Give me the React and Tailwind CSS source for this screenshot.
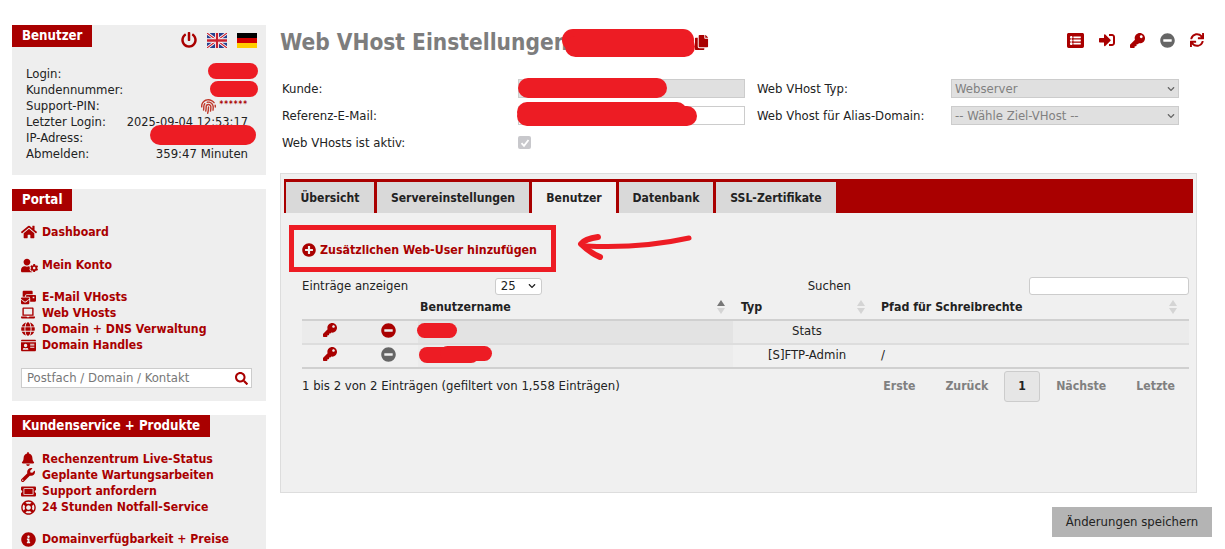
import {
  FaHome, FaUserCog, FaMailBulk, FaLaptop, FaGlobe, FaIdCard, FaSearch, FaBell, FaWrench, FaTicketAlt,
  FaRegLifeRing, FaInfoCircle, FaPowerOff, FaFingerprint, FaListAlt, FaSignInAlt, FaKey, FaMinusCircle,
  FaSync, FaPlusCircle, FaCopy, FaChevronDown,
} from 'react-icons/fa';

const font = { fontFamily: '"DejaVu Sans", sans-serif' };

const UkFlag = () => (
  <svg width="20" height="15" viewBox="0 0 60 40" preserveAspectRatio="none">
    <rect width="60" height="40" fill="#27408f" />
    <path d="M0 0L60 40M60 0L0 40" stroke="#fff" strokeWidth="8" />
    <path d="M0 0L60 40M60 0L0 40" stroke="#c8202f" strokeWidth="3" />
    <path d="M30 0V40M0 20H60" stroke="#fff" strokeWidth="12" />
    <path d="M30 0V40M0 20H60" stroke="#c8202f" strokeWidth="7" />
  </svg>
);

const DeFlag = () => (
  <div className="flex h-[15px] w-[20px] flex-col">
    <div className="flex-1 bg-black" />
    <div className="flex-1 bg-[#d00000]" />
    <div className="flex-1 bg-[#ffce00]" />
  </div>
);

const SideTitle = ({ children }) => (
  <div className="inline-block h-[22px] bg-[#a90000] px-[10px] text-[13.2px] leading-[22px] font-bold text-white">{children}</div>
);

const NavLink = ({ icon: Icon, size = 15, children, className = '' }) => (
  <div className={`flex h-4 items-center text-[12.2px] font-bold text-[#a90000] ${className}`}>
    <span className="flex w-[21px] shrink-0 justify-start"><Icon size={size} /></span>
    <span className="whitespace-nowrap">{children}</span>
  </div>
);

const InfoRow = ({ label, value }) => (
  <div className="flex h-4 items-center justify-between whitespace-nowrap">
    <span>{label}</span>
    <span>{value}</span>
  </div>
);

const Tab = ({ children, active, className = '' }) => (
  <div className={`flex h-[31px] items-center justify-center pt-[2px] text-[12.1px] font-bold text-[#222] ${active ? 'bg-[#f0f0f0]' : 'bg-[#d9d9d9]'} ${className}`}>
    {children}
  </div>
);

const SortArrows = ({ active, className = 'right-2' }) => (
  <span className={`absolute top-0 flex flex-col ${className}`}>
    <svg width="8" height="14" viewBox="0 0 8 14">
      <path d="M4 0L8 6H0Z" fill={active ? '#777' : '#d4d4d4'} />
      <path d="M4 14L0 8H8Z" fill="#d4d4d4" />
    </svg>
  </span>
);

const Blob = ({ className }) => <div className={`absolute rounded-full bg-[#ed1c24] ${className}`} />;

export default function App() {
  return (
    <div className="relative flex h-[549px] w-[1225px] overflow-hidden bg-white text-[13px] font-stretch-condensed text-[#222]" style={font}>
      {/* Sidebar */}
      <aside className="ml-3 flex w-[254px] shrink-0 flex-col gap-[14px] pt-[25px]">
        <section className="h-[150px] bg-[#eeeeee]">
          <div className="flex items-start justify-between">
            <SideTitle>Benutzer</SideTitle>
            <div className="mt-[7px] mr-[9px] flex items-center gap-[10px]">
              <FaPowerOff size={16} className="text-[#a90000]" />
              <UkFlag />
              <DeFlag />
            </div>
          </div>
          <div className="mt-[18px] mr-[18px] ml-[14px] flex flex-col">
            <InfoRow label="Login:" />
            <InfoRow label="Kundennummer:" />
            <InfoRow
              label="Support-PIN:"
              value={
                <span className="flex items-center gap-[3px] text-[8px] font-bold text-[#a90000]">
                  <FaFingerprint size={15} className="text-[#c0392b]" />
                  <span className="-mt-[3px] tracking-[1px]">******</span>
                </span>
              }
            />
            <InfoRow label="Letzter Login:" value={<span className="text-[12.7px]">2025-09-04 12:53:17</span>} />
            <InfoRow label="IP-Adress:" />
            <InfoRow label="Abmelden:" value="359:47 Minuten" />
          </div>
        </section>

        <section className="h-[212px] bg-[#eeeeee]">
          <SideTitle>Portal</SideTitle>
          <div className="mt-[13px] ml-[9px]">
            <NavLink icon={FaHome} size={16}>Dashboard</NavLink>
            <NavLink icon={FaUserCog} size={17} className="mt-[17px]">Mein Konto</NavLink>
            <NavLink icon={FaMailBulk} className="mt-4">E-Mail VHosts</NavLink>
            <NavLink icon={FaLaptop} size={14}>Web VHosts</NavLink>
            <NavLink icon={FaGlobe} size={14}>Domain + DNS Verwaltung</NavLink>
            <NavLink icon={FaIdCard}>Domain Handles</NavLink>
          </div>
          <div className="mt-[15px] ml-[9px] flex h-5 w-[231px] items-center justify-between border border-[#cccccc] bg-white pr-[3px] pl-[5px] text-[#777]">
            <span>Postfach / Domain / Kontakt</span>
            <FaSearch size={13} className="text-[#a90000]" />
          </div>
        </section>

        <section className="flex-1 bg-[#eeeeee]">
          <SideTitle>Kundenservice + Produkte</SideTitle>
          <div className="mt-[14px] ml-[9px]">
            <NavLink icon={FaBell} size={14}>Rechenzentrum Live-Status</NavLink>
            <NavLink icon={FaWrench} size={14}>Geplante Wartungsarbeiten</NavLink>
            <NavLink icon={FaTicketAlt}>Support anfordern</NavLink>
            <NavLink icon={FaRegLifeRing} size={15}>24 Stunden Notfall-Service</NavLink>
            <NavLink icon={FaInfoCircle} size={15} className="mt-4">Domainverfügbarkeit + Preise</NavLink>
          </div>
        </section>
      </aside>

      {/* Main */}
      <main className="ml-[14px] w-[932px] shrink-0">
        <header className="flex items-center justify-between pt-[28px]">
          <h1 className="flex items-center text-[22.5px] leading-[28px] font-bold text-[#7d7d7d]">
            Web VHost Einstellungen
            <FaCopy size={15} className="ml-[126px] text-[#a90000]" />
          </h1>
          <div className="-mt-1 mr-2 flex items-center gap-[15px] text-[#a90000]">
            <FaListAlt size={17} />
            <FaSignInAlt size={16} />
            <FaKey size={15} />
            <FaMinusCircle size={15} className="text-[#666]" />
            <FaSync size={14} />
          </div>
        </header>

        <div className="mt-[23px] ml-[2px] flex">
          <div className="flex w-[236px] flex-col gap-[8px]">
            <div className="h-[19px] leading-[19px]">Kunde:</div>
            <div className="h-[19px] leading-[19px]">Referenz-E-Mail:</div>
            <div className="h-[19px] leading-[19px]">Web VHosts ist aktiv:</div>
          </div>
          <div className="flex w-[227px] flex-col gap-[8px]">
            <div className="h-[19px] border border-[#cccccc] bg-[#e0e0e0]" />
            <div className="h-[19px] border border-[#cccccc] bg-white" />
            <div className="mt-[3px] flex h-[13px] w-[13px] items-center justify-center rounded-[2px] bg-[#c8c8cc]">
              <svg width="10" height="10" viewBox="0 0 10 10"><path d="M1.5 5.2L4 7.8L8.5 2" fill="none" stroke="#fff" strokeWidth="1.8" /></svg>
            </div>
          </div>
          <div className="ml-[12px] flex w-[194px] flex-col gap-[8px]">
            <div className="h-[19px] leading-[19px]">Web VHost Typ:</div>
            <div className="h-[19px] leading-[19px] whitespace-nowrap">Web Vhost für Alias-Domain:</div>
          </div>
          <div className="flex w-[228px] flex-col gap-[8px] text-[#808080]">
            <div className="flex h-[19px] items-center justify-between border border-[#cccccc] bg-[#e0e0e0] pr-[3px] pl-[3px]">
              <span>Webserver</span>
              <FaChevronDown size={8} className="text-[#666]" />
            </div>
            <div className="flex h-[19px] items-center justify-between border border-[#cccccc] bg-[#e0e0e0] pr-[3px] pl-[3px]">
              <span>-- Wähle Ziel-VHost --</span>
              <FaChevronDown size={8} className="text-[#666]" />
            </div>
          </div>
        </div>

        <section className="mt-[21px] h-[320px] w-[917px] border border-[#dddddd] bg-[#f0f0f0] px-[3px] pt-[5px]">
          <div className="flex h-[34px] items-end gap-[3px] bg-[#a90000] pl-[2px]">
            <Tab className="w-[88px]">Übersicht</Tab>
            <Tab className="w-[152px]">Servereinstellungen</Tab>
            <Tab active className="w-[84px]">Benutzer</Tab>
            <Tab className="w-[94px]">Datenbank</Tab>
            <Tab className="w-[120px]">SSL-Zertifikate</Tab>
          </div>

          <div className="mt-[28px] ml-[18px] flex h-[18px] items-center text-[12.3px] font-bold text-[#a90000]">
            <FaPlusCircle size={14} className="mr-[4px]" />
            Zusätzlichen Web-User hinzufügen
          </div>

          <div className="mt-[18px] ml-[18px] w-[887px]">
            <div className="flex h-[18px] items-center">
              <span className="w-[193px]">Einträge anzeigen</span>
              <span className="flex h-[17px] w-[47px] items-center justify-between rounded-[3px] border border-[#cccccc] bg-white px-[5px]">
                25 <FaChevronDown size={8} />
              </span>
              <span className="ml-[266px] w-[221px]">Suchen</span>
              <span className="ml-[1px] h-[18px] w-40 rounded-[3px] border border-[#cccccc] bg-white" />
            </div>

            <table className="mt-[5px] w-[887px] table-fixed border-collapse">
              <colgroup>
                <col className="w-[56px]" />
                <col className="w-[60px]" />
                <col className="w-[315px]" />
                <col className="w-[140px]" />
                <col className="w-[316px]" />
              </colgroup>
              <thead>
                <tr className="h-[20px] border-b-2 border-[#d0d0d0] text-left">
                  <th />
                  <th />
                  <th className="relative pb-[5px] pl-[2px] text-[12.3px] leading-[14px] font-bold">Benutzername<SortArrows active /></th>
                  <th className="relative pb-[5px] pl-2 text-[12.3px] leading-[14px] font-bold">Typ<SortArrows /></th>
                  <th className="relative pb-[5px] pl-2 text-[12.3px] leading-[14px] font-bold">Pfad für Schreibrechte<SortArrows className="right-3" /></th>
                </tr>
              </thead>
              <tbody>
                <tr className="h-[24px] border-b-2 border-[#dddddd] bg-[#ebebeb]">
                  <td className="pb-1"><FaKey size={14} className="mx-auto text-[#a90000]" /></td>
                  <td className="pb-1"><FaMinusCircle size={15} className="mx-auto text-[#a90000]" /></td>
                  <td className="bg-[#e3e3e3]" />
                  <td className="pb-[2px] pl-2 text-center">Stats</td>
                  <td />
                </tr>
                <tr className="h-[24px] border-b-2 border-[#d0d0d0]">
                  <td className="pb-1"><FaKey size={14} className="mx-auto text-[#a90000]" /></td>
                  <td className="pb-1"><FaMinusCircle size={15} className="mx-auto text-[#666]" /></td>
                  <td className="bg-[#ececec]" />
                  <td className="pb-[2px] pl-2 text-center">[S]FTP-Admin</td>
                  <td className="pb-[2px] pl-2">/</td>
                </tr>
              </tbody>
            </table>

            <div className="mt-[2px] flex items-start justify-between">
              <span className="mt-[5px]">1 bis 2 von 2 Einträgen (gefiltert von 1,558 Einträgen)</span>
              <div className="mr-[14px] flex items-center gap-[30px] text-[12.2px] font-bold text-[#808080]">
                <span>Erste</span>
                <span>Zurück</span>
                <span className="-mx-[14px] flex h-[31px] w-[36px] items-center justify-center rounded-[3px] border border-[#cccccc] bg-[#e6e6e6] text-[#222]">1</span>
                <span>Nächste</span>
                <span>Letzte</span>
              </div>
            </div>
          </div>
        </section>

        <div className="mt-[14px] flex w-[932px] justify-end">
          <button className="h-[30px] w-[160px] bg-[#b4b4b4] text-[13px] text-[#222]">Änderungen speichern</button>
        </div>
      </main>

      {/* Redaction scribbles painted over the screenshot */}
      <Blob className="top-[63px] left-[208px] h-[16px] w-[50px]" />
      <Blob className="top-[81px] left-[210px] h-[16px] w-[48px]" />
      <Blob className="top-[125px] left-[150px] h-[20px] w-[106px]" />
      <Blob className="top-[29px] left-[562px] h-[22px] w-[132px]" />
      <Blob className="top-[36px] left-[565px] h-[21px] w-[130px]" />
      <Blob className="top-[78px] left-[518px] h-[20px] w-[149px]" />
      <Blob className="top-[102px] left-[517px] h-[20px] w-[170px]" />
      <Blob className="top-[106px] left-[517px] h-[20px] w-[180px]" />
      <Blob className="top-[323px] left-[417px] h-[15px] w-[40px]" />
      <Blob className="top-[347px] left-[419px] h-[16px] w-[60px]" />
      <Blob className="top-[346px] left-[440px] h-[15px] w-[52px]" />

      {/* Annotation box and arrow */}
      <div className="absolute top-[225px] left-[289px] h-[47px] w-[267px] border-[5px] border-[#ed1c24]" />
      <svg className="absolute top-[228px] left-[572px]" width="126" height="36" viewBox="0 0 126 36">
        <path d="M117 10C90 16 55 20 14 18" fill="none" stroke="#ed1c24" strokeWidth="5" strokeLinecap="round" />
        <path d="M26 9C18 10 12 12 9 16C14 21 21 26 28 29" fill="none" stroke="#ed1c24" strokeWidth="6" strokeLinecap="round" strokeLinejoin="round" />
      </svg>
    </div>
  );
}
